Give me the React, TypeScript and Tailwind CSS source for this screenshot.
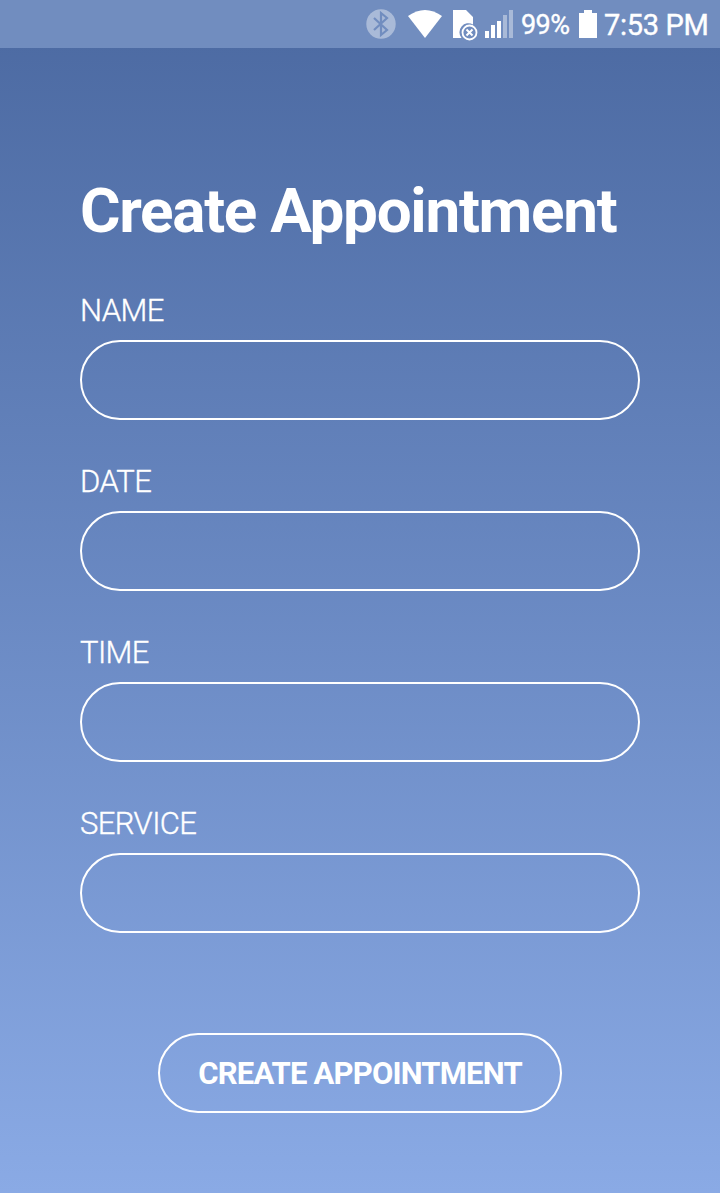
const fields = ['NAME', 'DATE', 'TIME', 'SERVICE'];

function StatusBar() {
  return (
    <header className="flex h-12 shrink-0 items-center bg-[#718dbf] pl-[362px] whitespace-nowrap">
      <svg className="shrink-0" width="154" height="48" viewBox="362 0 154 48" fill="white" aria-hidden="true">
        <circle cx="381" cy="24" r="14.700" opacity=".4" />
        <path d="M374 18l13 12-6 5v-22l6 5-13 12" fill="none" stroke="#718dbf" strokeWidth="2.200" />
        <path d="M408 16q17-12 34 0L425 38z" />
        <path d="M453 10h13l7 7v7.500a9 9 0 0 0-11.500 13.500H453z" />
        <circle cx="469.500" cy="32.500" r="7" fill="none" stroke="white" strokeWidth="1.800" />
        <path d="M466.500 29.500l6 6m0-6l-6 6" stroke="white" strokeWidth="2" />
        <path d="M485 31h4v7h-4zM491 25h4v13h-4zM497 21h4v17h-4z" />
        <path d="M503 15h4v23h-4zM509 10h4v28h-4z" opacity=".4" />
      </svg>
      <div className="w-[63px] shrink-0 pt-[3px] pl-[5px] text-[27px] leading-none font-normal tracking-[-0.600px] [-webkit-text-stroke:0.4px_white]">99%</div>
      <svg className="shrink-0" width="18" height="28" viewBox="0 0 18 28" fill="white" aria-hidden="true">
        <path d="M5 0h8v3h5v25H0V3h5z" />
      </svg>
      <div className="pt-[2px] pl-[7px] text-[29px] leading-none font-normal tracking-[-0.300px] [-webkit-text-stroke:0.4px_white]">7:53 PM</div>
    </header>
  );
}

export default function App() {
  return (
    <div className="flex h-[1193px] w-[720px] flex-col bg-linear-to-b from-[#4b69a1] to-[#8aaae5] font-['Roboto',sans-serif] text-white">
      <StatusBar />
      <main className="flex flex-col px-20 pt-[126px]">
        <h1 className="text-[62px] leading-[74px] font-bold tracking-[-1.300px] whitespace-nowrap">Create Appointment</h1>
        <form className="mt-[43px] flex flex-col">
          {fields.map((field) => (
            <label key={field} className="mb-[42px] flex flex-col text-[31px] leading-10 font-light tracking-[-0.600px]">
              <span className="mb-[9px] [-webkit-text-stroke:0.35px_white]">{field}</span>
              <input className="h-20 rounded-full border-2 border-white bg-transparent px-8 outline-none" />
            </label>
          ))}
          <button type="button" className="mt-[58px] h-20 w-[404px] self-center rounded-full border-2 border-white pt-[2px] text-[31px] font-bold tracking-[-0.800px]">
            CREATE APPOINTMENT
          </button>
        </form>
      </main>
    </div>
  );
}
